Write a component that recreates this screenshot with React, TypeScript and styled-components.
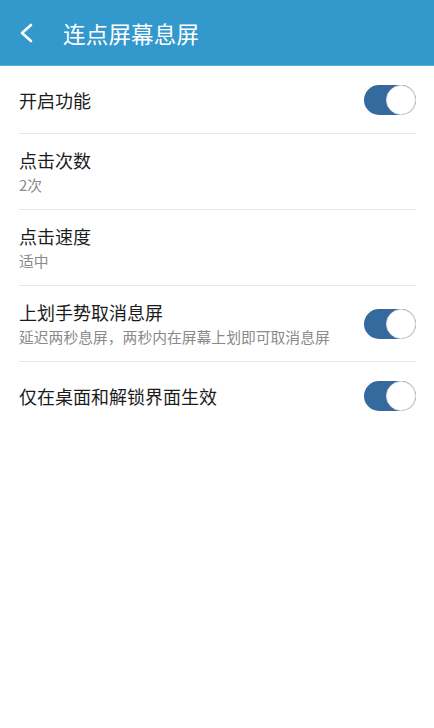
import styled, { createGlobalStyle } from "styled-components";

const GlobalStyle = createGlobalStyle`
  html, body {
    margin: 0;
    padding: 0;
    background: #fff;
    font-family: "Noto Sans CJK SC", "Noto Sans", sans-serif;
  }
`;

type Setting = {
  id: number;
  title: string;
  sub?: string;
  toggle?: boolean;
};

const settings: Setting[] = [
  { id: 1, title: "开启功能", toggle: true },
  { id: 2, title: "点击次数", sub: "2次" },
  { id: 3, title: "点击速度", sub: "适中" },
  { id: 4, title: "上划手势取消息屏", sub: "延迟两秒息屏，两秒内在屏幕上划即可取消息屏", toggle: true },
  { id: 5, title: "仅在桌面和解锁界面生效", toggle: true },
];

function App() {
  return (
    <Page>
      <GlobalStyle />
      <Header>
        <BackButton>
          <svg width="16" height="20" viewBox="0 0 16 20">
            <path d="M13 2 L4 10 L13 18" fill="none" stroke="#fff" strokeWidth="2.6" strokeLinecap="round" strokeLinejoin="round" />
          </svg>
        </BackButton>
        <HeaderTitle>连点屏幕息屏</HeaderTitle>
      </Header>
      <List>
        {settings.map((s, i) => (
          <Row key={s.id} $hasSub={!!s.sub} $last={i === settings.length - 1}>
            <TextBlock>
              <Title>{s.title}</Title>
              {s.sub && <Sub>{s.sub}</Sub>}
            </TextBlock>
            {s.toggle && (
              <Switch>
                <Knob />
              </Switch>
            )}
          </Row>
        ))}
      </List>
    </Page>
  );
}

export default App;

const Page = styled.div`
  width: 434px;
  min-height: 728px;
  background: #fff;
`;

const Header = styled.div`
  height: 65px;
  background: #3399cc;
  display: flex;
  align-items: center;
  border-bottom: 1px solid #5aaedb;
`;

const BackButton = styled.div`
  width: 62px;
  display: flex;
  align-items: center;
  padding-left: 18px;
  box-sizing: border-box;
  margin-top: 1px;
`;

const HeaderTitle = styled.div`
  color: #fff;
  font-size: 22.5px;
  letter-spacing: 0.2px;
  margin-left: 1px;
`;

const List = styled.div`
  display: flex;
  flex-direction: column;
`;

const Row = styled.div<{ $hasSub: boolean; $last: boolean }>`
  margin: 0 18px 0 19px;
  display: flex;
  align-items: center;
  justify-content: space-between;
  box-sizing: border-box;
  height: ${(p) => (p.$hasSub ? "76px" : "68px")};
  border-bottom: ${(p) => (p.$last ? "none" : "1px solid #e8e8e8")};
`;

const TextBlock = styled.div`
  display: flex;
  flex-direction: column;
  gap: 3px;
`;

const Title = styled.div`
  font-size: 18px;
  line-height: 24px;
  color: #1c1c1c;
`;

const Sub = styled.div`
  font-size: 14.8px;
  line-height: 20px;
  color: #8a8a8a;
`;

const Switch = styled.div`
  width: 52px;
  height: 30px;
  border-radius: 15px;
  background: #356a9e;
  display: flex;
  justify-content: flex-end;
  flex-shrink: 0;
`;

const Knob = styled.div`
  width: 30px;
  height: 30px;
  box-sizing: border-box;
  border-radius: 50%;
  background: #fff;
  border: 1px solid #dcdcdc;
`;
